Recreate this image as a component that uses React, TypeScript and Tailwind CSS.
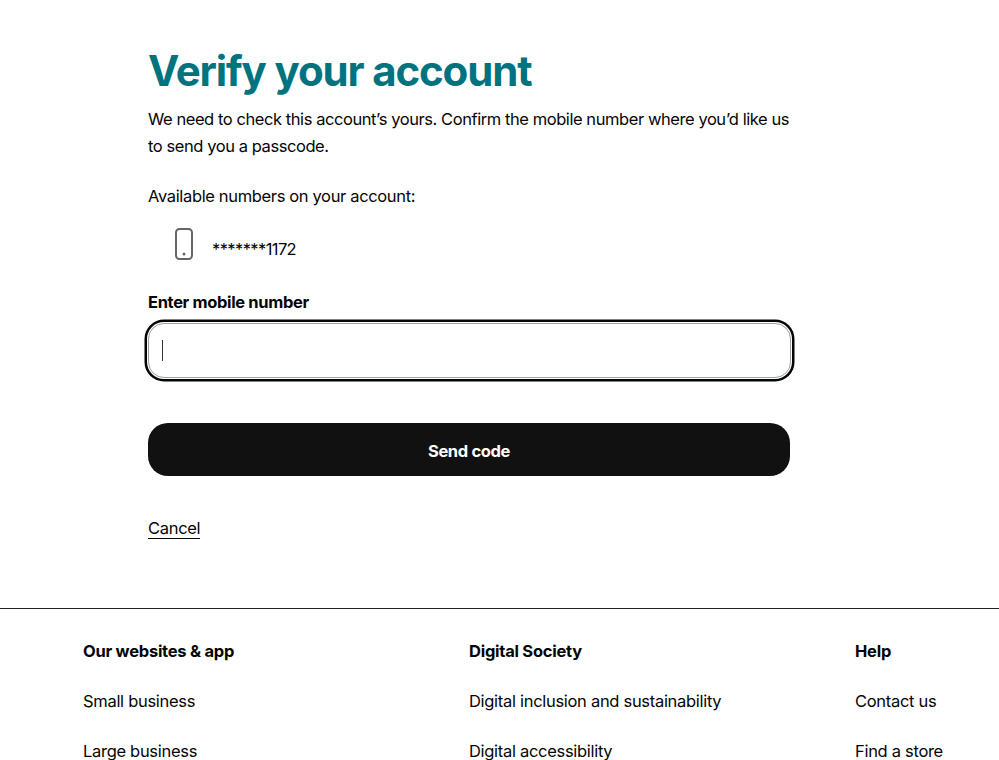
const footerColumns = [
  { title: "Our websites & app", links: ["Small business", "Large business"] },
  { title: "Digital Society", links: ["Digital inclusion and sustainability", "Digital accessibility"] },
  { title: "Help", links: ["Contact us", "Find a store"] },
];

const PhoneIcon = () => (
  <svg width="20" height="32" viewBox="0 0 20 32" fill="none" className="text-[#63676b]">
    <rect x="2" y="1" width="16" height="30" rx="3.5" stroke="currentColor" strokeWidth="2" />
    <circle cx="10" cy="26" r="1.5" fill="currentColor" />
  </svg>
);

export default function App() {
  return (
    <div className="h-screen overflow-hidden bg-white text-[#050505] font-['Inter','Liberation_Sans',sans-serif]">
      <main className="w-[642px] ml-[148px] pt-[42px]">
        <h1 className="text-[42px] leading-[58px] font-bold tracking-[-1.15px] text-[#00737f] whitespace-nowrap">Verify your account</h1>
        <p className="mt-[6px] text-[16.5px] leading-[27px] tracking-[-0.43px] whitespace-nowrap">
          We need to check this account’s yours. Confirm the mobile number where you’d like us
          <br />
          to send you a passcode.
        </p>
        <p className="mt-[23px] text-[16.5px] leading-[27px] tracking-[-0.35px]">Available numbers on your account:</p>
        <div className="flex items-start h-[32px] mt-[18px] ml-[26px]">
          <PhoneIcon />
          <span className="ml-[18px] mt-[8px] text-[16.5px] leading-[27px] tracking-[-0.6px]">*******1172</span>
        </div>
        <label className="block mt-[29px] text-[16.5px] leading-[27px] font-bold tracking-[-0.35px]">Enter mobile number</label>
        <div className="relative mt-[7px] w-[643px]">
          <input
            type="text"
            className="block w-full h-[55px] px-[14px] rounded-[16px] border border-[#94a5a6] bg-white outline-none caret-transparent shadow-[0_0_0_1px_#fff,0_0_0_3.5px_#050505]"
          />
          <span className="absolute left-[14px] top-[17px] w-px h-[21px] bg-[#333]" />
        </div>
        <button className="block w-full h-[53px] mt-[45px] pt-[3px] rounded-[20px] bg-[#111] text-white text-[16.5px] font-bold tracking-[-0.35px]">
          Send code
        </button>
        <a href="#" className="inline-block mt-[42px] text-[16.5px] leading-[20px] tracking-[-0.3px] border-b border-[#050505]">
          Cancel
        </a>
      </main>
      <footer className="mt-[68px] border-t border-[#222] px-[83px] pt-[29px] grid grid-cols-[386px_386px_1fr]">
        {footerColumns.map((col) => (
          <div key={col.title}>
            <h2 className="text-[16.5px] leading-[27px] font-bold tracking-[-0.25px]">{col.title}</h2>
            <ul className="mt-[23px] flex flex-col gap-[23px]">
              {col.links.map((link) => (
                <li key={link} className="text-[16.5px] leading-[27px] tracking-[-0.3px] whitespace-nowrap">{link}</li>
              ))}
            </ul>
          </div>
        ))}
      </footer>
    </div>
  );
}
